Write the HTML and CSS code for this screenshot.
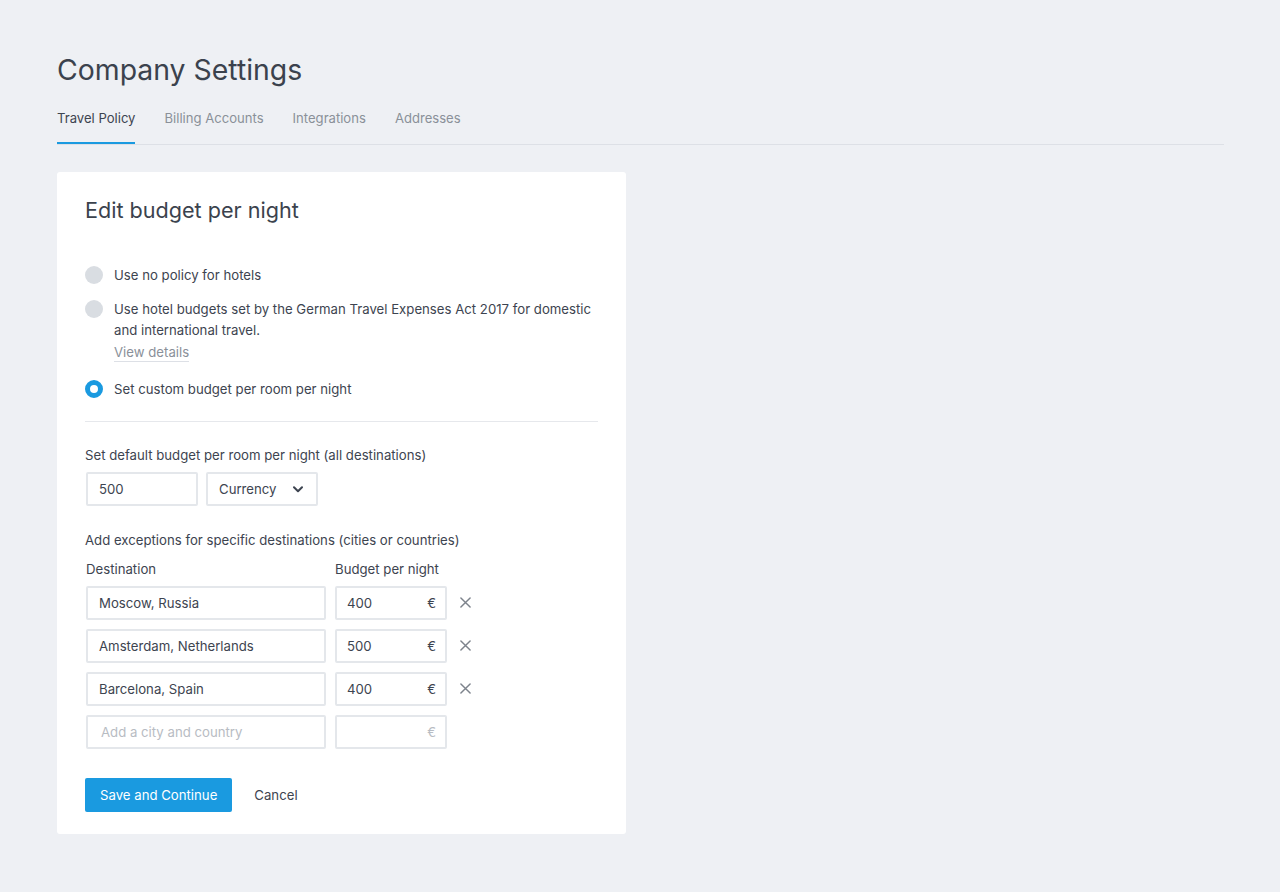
FILE: index.html
```html
<!DOCTYPE html>
<html>
<head>
<meta charset="utf-8">
<link rel="stylesheet" href="styles.css">
</head>
<body>
<div class="page">
  <h1 class="title">Company Settings</h1>
  <nav class="tabs">
    <a class="tab active">Travel Policy</a>
    <a class="tab">Billing Accounts</a>
    <a class="tab">Integrations</a>
    <a class="tab">Addresses</a>
  </nav>
  <section class="card">
    <h2 class="card-title">Edit budget per night</h2>
    <div class="options">
      <div class="option">
        <span class="radio"></span>
        <div class="option-text">Use no policy for hotels</div>
      </div>
      <div class="option second">
        <span class="radio"></span>
        <div class="option-text">Use hotel budgets set by the German Travel Expenses Act 2017 for domestic and international travel.<br><a class="details">View details</a></div>
      </div>
      <div class="option third">
        <span class="radio checked"></span>
        <div class="option-text">Set custom budget per room per night</div>
      </div>
    </div>
    <div class="divider"></div>
    <div class="label">Set default budget per room per night (all destinations)</div>
    <div class="default-row">
      <div class="input small">500</div>
      <div class="input small select">Currency
        <svg class="chev" width="10" height="7" viewBox="0 0 10 7"><path d="M1 1.2 L5 5.2 L9 1.2" fill="none" stroke="#3d4450" stroke-width="2" stroke-linecap="round" stroke-linejoin="round"/></svg>
      </div>
    </div>
    <div class="label exc">Add exceptions for specific destinations (cities or countries)</div>
    <div class="grid">
      <div class="col-label">Destination</div>
      <div class="col-label">Budget per night</div>
      <div></div>
      <div class="input wide">Moscow, Russia</div>
      <div class="input small money"><span>400</span><span>€</span></div>
      <div class="remove"><svg width="12" height="12" viewBox="0 0 12 12"><path d="M1 1 L11 11 M11 1 L1 11" stroke="#7d838c" stroke-width="1.6" stroke-linecap="round"/></svg></div>
      <div class="input wide">Amsterdam, Netherlands</div>
      <div class="input small money"><span>500</span><span>€</span></div>
      <div class="remove"><svg width="12" height="12" viewBox="0 0 12 12"><path d="M1 1 L11 11 M11 1 L1 11" stroke="#7d838c" stroke-width="1.6" stroke-linecap="round"/></svg></div>
      <div class="input wide">Barcelona, Spain</div>
      <div class="input small money"><span>400</span><span>€</span></div>
      <div class="remove"><svg width="12" height="12" viewBox="0 0 12 12"><path d="M1 1 L11 11 M11 1 L1 11" stroke="#7d838c" stroke-width="1.6" stroke-linecap="round"/></svg></div>
      <div class="input wide placeholder">Add a city and country</div>
      <div class="input small money placeholder"><span></span><span>€</span></div>
      <div></div>
    </div>
    <div class="actions">
      <button class="btn">Save and Continue</button>
      <a class="cancel">Cancel</a>
    </div>
  </section>
</div>
</body>
</html>
```
FILE: styles.css
```css
* { box-sizing: border-box; }
html, body { margin: 0; padding: 0; }
body {
  background: #eef0f4;
  font-family: "Inter", "Liberation Sans", sans-serif;
  color: #3d4450;
  width: 1280px;
  height: 892px;
  overflow: hidden;
}
.page {
  padding: 52px 56px 0 57px;
}
.title {
  margin: 0;
  font-size: 28.4px;
  font-weight: 400;
  line-height: 36px;
  color: #3b424d;
}
.tabs {
  display: flex;
  gap: 29px;
  margin-top: 19px;
  border-bottom: 1px solid #dde0e6;
  height: 38px;
}
.tab {
  font-size: 13.1px;
  color: #8a9099;
  line-height: 20px;
  padding-top: 1px;
  height: 37px;
  border-bottom: 2px solid transparent;
}
.tab.active {
  color: #3d4450;
  border-bottom-color: #1a9ae0;
}
.card {
  margin-top: 27px;
  width: 569px;
  background: #fff;
  border-radius: 3px;
  padding: 24px 28px 22px 28px;
}
.card-title {
  margin: 0;
  font-size: 21.6px;
  font-weight: 400;
  line-height: 28px;
  color: #3b424d;
}
.options {
  margin-top: 41px;
  display: flex;
  flex-direction: column;
  gap: 14px;
}
.option {
  display: flex;
  gap: 11px;
  align-items: flex-start;
}
.option.second { margin-top: -2px; }
.option.third { margin-top: 2px; }
.radio {
  width: 18px;
  height: 18px;
  border-radius: 50%;
  background: #d9dde2;
  flex: none;
  margin-top: 1px;
}
.radio.checked {
  background: #fff;
  border: 5px solid #1a9ae0;
}
.option-text {
  font-size: 13.2px;
  line-height: 21.5px;
  color: #3d4450;
}
.details {
  color: #8a9099;
  border-bottom: 1px solid #dde0e6;
  padding-bottom: 1px;
}
.divider {
  height: 1px;
  background: #e6e8ec;
  margin-top: 20px;
}
.label {
  font-size: 13.2px;
  line-height: 20px;
  margin-top: 23px;
}
.label.exc { margin-top: 24px; }
.default-row {
  display: flex;
  gap: 8px;
  margin-top: 7px;
  padding-left: 1px;
}
.input {
  height: 34px;
  border: 2px solid #e4e7eb;
  border-radius: 2px;
  font-size: 13.2px;
  color: #3d4450;
  display: flex;
  align-items: center;
  padding: 0 11px;
}
.input.small { width: 112px; }
.input.wide { width: 240px; }
.select {
  justify-content: space-between;
  padding-right: 13px;
}
.chev { margin-top: 1px; }
.money {
  justify-content: space-between;
  padding: 0 9px 0 10px;
}
.placeholder { color: #b8bcc3; }
.placeholder.wide { padding-left: 13px; }
.grid {
  display: grid;
  grid-template-columns: 240px 112px 30px;
  column-gap: 9px;
  row-gap: 9px;
  margin-top: 9px;
  padding-left: 1px;
}
.grid .col-label {
  font-size: 13.2px;
  line-height: 20px;
  margin-bottom: -2px;
}
.remove {
  display: flex;
  align-items: center;
  padding-left: 4px;
}
.remove svg { width: 11px; height: 11px; }
.actions {
  display: flex;
  align-items: center;
  gap: 22px;
  margin-top: 29px;
}
.btn {
  background: #1a9ae0;
  color: #fff;
  border: none;
  border-radius: 2px;
  height: 34px;
  padding: 0 15px;
  font-family: inherit;
  font-size: 13.2px;
}
.cancel {
  font-size: 13.2px;
  color: #3d4450;
}
```
